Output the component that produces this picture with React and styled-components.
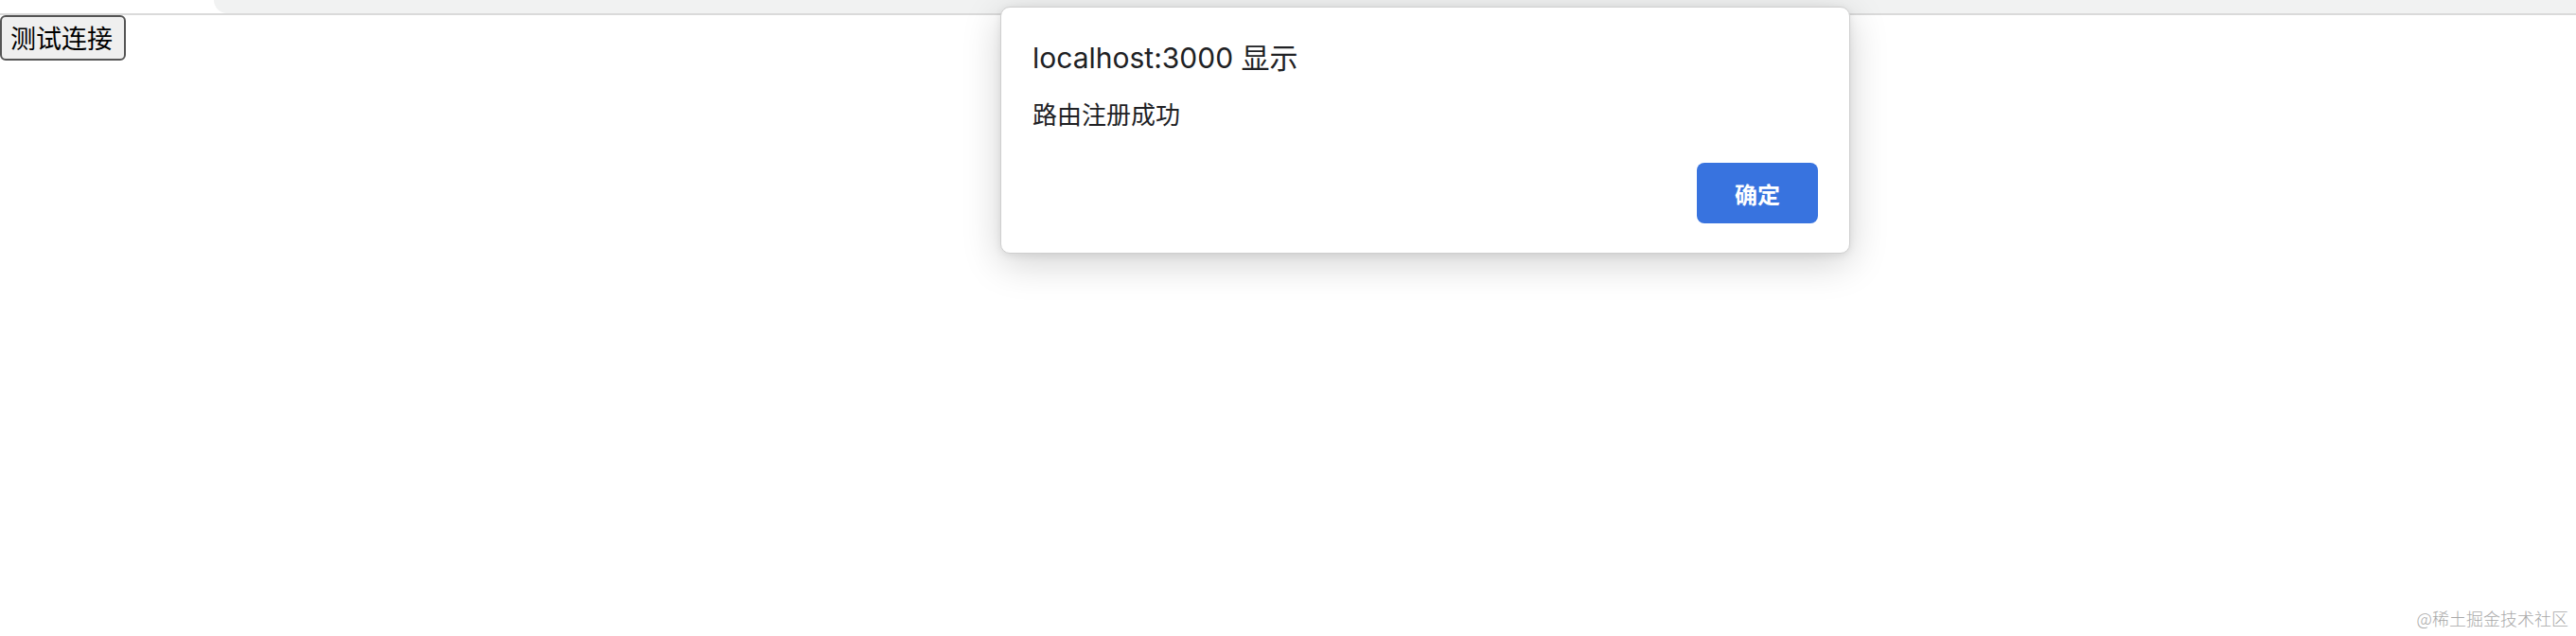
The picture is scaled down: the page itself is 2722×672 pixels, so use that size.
import styled, { createGlobalStyle } from "styled-components";

const GlobalStyle = createGlobalStyle`
  html, body {
    margin: 0;
    padding: 0;
    background: #ffffff;
  }
  body {
    width: 2722px;
    height: 672px;
    overflow: hidden;
    font-family: "Noto Sans", "Noto Sans CJK SC", sans-serif;
  }
`;

const Page = styled.div`
  position: relative;
  width: 2722px;
  height: 672px;
  background: #ffffff;
`;

const TopBar = styled.div`
  display: flex;
  flex-direction: column;
`;

const TabStrip = styled.div`
  height: 14px;
  margin-left: 226px;
  background: #f1f2f2;
  border-bottom-left-radius: 18px;
`;

const Divider = styled.div`
  height: 2px;
  background: #dadada;
`;

const TestButton = styled.button`
  display: block;
  height: 48px;
  margin: 0;
  padding: 0 12px 0 9px;
  background: #efefef;
  border: 2px solid #555555;
  border-radius: 6px;
  color: #000000;
  font-family: "Noto Sans CJK SC", sans-serif;
  font-size: 27px;
  line-height: 44px;
`;

const Dialog = styled.div`
  position: absolute;
  left: 1057px;
  top: 7px;
  width: 898px;
  height: 261px;
  box-sizing: border-box;
  padding: 33px 33px 31px 33px;
  display: flex;
  flex-direction: column;
  background: #ffffff;
  border: 1px solid #cfcfcf;
  border-radius: 10px;
  box-shadow: 0 10px 40px rgba(0, 0, 0, 0.18), 0 2px 8px rgba(0, 0, 0, 0.08);
`;

const Title = styled.div`
  font-family: "Inter", "Noto Sans CJK SC", sans-serif;
  font-size: 30px;
  line-height: 40px;
  color: #202124;
`;

const Message = styled.div`
  margin-top: 23px;
  font-family: "Noto Sans CJK SC", sans-serif;
  font-size: 26px;
  line-height: 32px;
  color: #202124;
`;

const Actions = styled.div`
  margin-top: auto;
  display: flex;
  justify-content: flex-end;
`;

const OkButton = styled.button`
  width: 128px;
  height: 64px;
  border: none;
  border-radius: 8px;
  background: #3873df;
  color: #ffffff;
  font-family: "Noto Sans CJK SC", sans-serif;
  font-size: 24px;
  font-weight: 700;
  cursor: pointer;
`;

const Watermark = styled.div`
  position: absolute;
  right: 8px;
  bottom: 6px;
  font-family: "Noto Sans CJK SC", sans-serif;
  font-size: 18px;
  font-weight: 300;
  color: #a9a9a9;
`;

export default function App() {
  return (
    <Page>
      <GlobalStyle />
      <TopBar>
        <TabStrip />
        <Divider />
      </TopBar>
      <TestButton>测试连接</TestButton>
      <Dialog>
        <Title>localhost:3000 显示</Title>
        <Message>路由注册成功</Message>
        <Actions>
          <OkButton>确定</OkButton>
        </Actions>
      </Dialog>
      <Watermark>@稀土掘金技术社区</Watermark>
    </Page>
  );
}
